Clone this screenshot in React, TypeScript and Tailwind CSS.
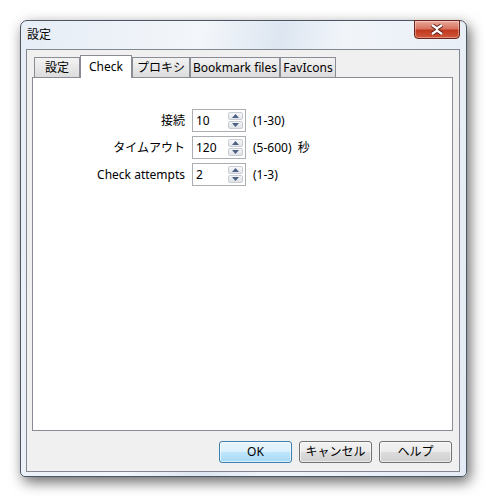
const Spin = () => (
  <div className="flex flex-col w-[15px] h-[17px] gap-[1px]">
    <div className="flex-1 flex items-center justify-center rounded-[2px] border border-[#c9cdd3] bg-gradient-to-b from-[#f7f8fa] to-[#e3e6ea]">
      <svg width="7" height="4" viewBox="0 0 7 4">
        <path d="M0 4 L3.5 0 L7 4 Z" fill="#4d6185" />
      </svg>
    </div>
    <div className="flex-1 flex items-center justify-center rounded-[2px] border border-[#c9cdd3] bg-gradient-to-b from-[#f2f4f6] to-[#dfe2e7]">
      <svg width="7" height="4" viewBox="0 0 7 4">
        <path d="M0 0 L7 0 L3.5 4 Z" fill="#4d6185" />
      </svg>
    </div>
  </div>
);

const Row = ({ label, value, hint }: { label: string; value: string; hint: string }) => (
  <>
    <div className="text-right leading-[23px] h-[23px]">{label}</div>
    <div className="h-[23px] w-[54px] border border-[#abadb3] bg-white flex items-center justify-between pl-[3px] pr-[2px]">
      <span>{value}</span>
      <Spin />
    </div>
    <div className="leading-[23px] h-[23px] whitespace-pre">{hint}</div>
  </>
);

const Tab = ({ label, w, active }: { label: string; w: string; active?: boolean }) =>
  active ? (
    <div className={`${w} h-[23px] -mb-[1px] z-10 bg-white border border-b-0 border-[#898c95] flex items-start justify-center pt-[2px]`}>
      {label}
    </div>
  ) : (
    <div className={`${w} h-[20px] border border-b-0 border-[#898c95] bg-gradient-to-b from-[#f3f3f3] to-[#dcdcdc] flex items-center justify-center pt-[1px]`}>
      {label}
    </div>
  );

export default function App() {
  return (
    <div
      className="w-[490px] h-[501px] bg-white pt-[20px] pl-[20px] text-[12px] text-black"
      style={{ fontFamily: '"Noto Sans", "Noto Sans CJK JP", sans-serif' }}
    >
      <div className="w-[447px] h-[457px] rounded-t-[7px] rounded-b-[5px] border border-[#4b5563] bg-[linear-gradient(100deg,#e6edf6_0%,#f3f6fa_35%,#dde6f1_50%,#f1f5fa_62%,#e4ebf4_100%)] shadow-[3px_5px_14px_rgba(0,0,0,0.6)] flex flex-col pl-[5px] pr-[6px] pb-[4px]">
        <div className="h-[28px] flex items-start justify-between">
          <div className="pt-[5px] pl-[1px] text-[12px]">設定</div>
          <div className="w-[46px] h-[19px] -mt-[1px] rounded-b-[4px] border border-[#6b2419] bg-[linear-gradient(#eaa89b_0%,#d7735e_45%,#c0391f_55%,#d0573a_100%)] flex items-center justify-center shadow-[inset_0_0_0_1px_rgba(255,255,255,0.35)]">
            <svg width="14" height="11" viewBox="0 0 14 11">
              <path d="M2 1 L7 4.5 L12 1 M2 10 L7 6.5 L12 10" stroke="#5a2018" strokeWidth="4" fill="none" />
              <path d="M2 1 L7 4.5 L12 1 M2 10 L7 6.5 L12 10 M7 4.5 L7 6.5" stroke="#ffffff" strokeWidth="2.2" fill="none" />
            </svg>
          </div>
        </div>
        <div className="flex-1 border border-[#828790] bg-[#f0f0f0] flex flex-col pt-[5px] pl-[5px] pr-[6px] pb-[8px]">
          <div className="h-[22px] flex items-end pl-[2px]">
            <Tab label="設定" w="w-[46px]" />
            <Tab label="Check" w="w-[52px]" active />
            <Tab label="プロキシ" w="w-[58px]" />
            <Tab label="Bookmark files" w="w-[90px]" />
            <Tab label="FavIcons" w="w-[56px]" />
          </div>
          <div className="h-[354px] bg-white border border-[#898c95] pt-[31px]">
            <div className="grid grid-cols-[152px_54px_auto] gap-x-[7px] gap-y-[4px]">
              <Row label="接続" value="10" hint="(1-30)" />
              <Row label="タイムアウト" value="120" hint="(5-600)  秒" />
              <Row label="Check attempts" value="2" hint="(1-3)" />
            </div>
          </div>
          <div className="mt-[10px] flex justify-end gap-[7px] pr-[1px]">
            <button className="w-[73px] h-[22px] rounded-[3px] border border-[#3c7fb1] bg-[linear-gradient(#eaf6fd_0%,#d9f0fc_50%,#bee6fd_51%,#a7d9f5_100%)] shadow-[inset_0_0_0_1px_rgba(255,255,255,0.6)]">
              OK
            </button>
            <button className="w-[73px] h-[22px] rounded-[3px] border border-[#707070] bg-[linear-gradient(#f2f2f2_0%,#ebebeb_50%,#dddddd_51%,#cfcfcf_100%)] shadow-[inset_0_0_0_1px_rgba(255,255,255,0.6)]">
              キャンセル
            </button>
            <button className="w-[73px] h-[22px] rounded-[3px] border border-[#707070] bg-[linear-gradient(#f2f2f2_0%,#ebebeb_50%,#dddddd_51%,#cfcfcf_100%)] shadow-[inset_0_0_0_1px_rgba(255,255,255,0.6)]">
              ヘルプ
            </button>
          </div>
        </div>
      </div>
    </div>
  );
}
